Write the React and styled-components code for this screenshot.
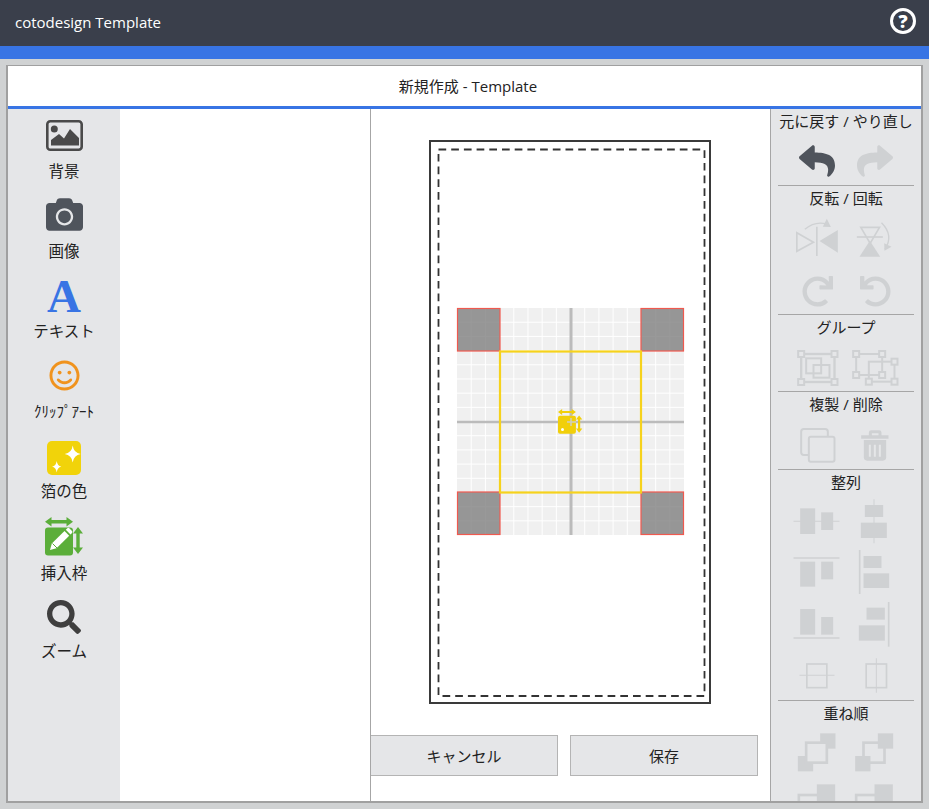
import styled, { createGlobalStyle } from "styled-components";
import { FaCamera, FaRegSmile, FaSearch, FaReply, FaShare, FaRedo, FaUndo } from "react-icons/fa";

const DARK = "#3a3f4b";
const BLUE = "#3874e4";
const RAIL = "#e5e6e8";
const GHOST = "#cfd1d3";
const LINE = "#a6a6a6";

const Global = createGlobalStyle`
  html, body {
    margin: 0;
    height: 100%;
    overflow: hidden;
    background: #d0d2d3;
    color: #222;
    font-family: "Open Sans", "Noto Sans CJK JP", sans-serif;
    font-size: 15px;
  }
  #root { height: 100%; }
`;

const Page = styled.div`
  display: flex;
  flex-direction: column;
  height: 100%;
`;

const Header = styled.header`
  flex: none;
  height: 46px;
  background: ${DARK};
  color: #fff;
  display: flex;
  align-items: center;
  justify-content: space-between;
  padding: 0 13px 2px 15px;
  box-sizing: border-box;
`;

const HelpButton = styled.div`
  width: 26px;
  height: 26px;
  margin-top: -3px;
  box-sizing: border-box;
  border: 3px solid #fff;
  border-radius: 50%;
  display: flex;
  align-items: center;
  justify-content: center;
  font-weight: 800;
  font-size: 18px;
  line-height: 1;
`;

const BlueBar = styled.div`
  flex: none;
  height: 13px;
  background: ${BLUE};
`;

const Panel = styled.main`
  flex: 1;
  min-height: 0;
  margin: 6px;
  border: 2px solid #a0a0a0;
  border-top-width: 1px;
  display: flex;
  flex-direction: column;
  background: #fff;
`;

const TitleBar = styled.div`
  flex: none;
  height: 38px;
  padding: 0 0 2px 7px;
  border-bottom: 3px solid ${BLUE};
  display: flex;
  align-items: center;
  justify-content: center;
`;

const Body = styled.div`
  flex: 1;
  min-height: 0;
  display: flex;
`;

const ToolRail = styled.nav`
  flex: none;
  width: 112px;
  padding-top: 1px;
  background: ${RAIL};
`;

const Tool = styled.div`
  height: 80px;
  display: flex;
  flex-direction: column;
  align-items: center;
`;

const ToolIcon = styled.div`
  height: 50px;
  padding-top: ${(p) => p.$pt || 0}px;
  padding-bottom: ${(p) => p.$pb || 0}px;
  box-sizing: border-box;
  display: flex;
  align-items: center;
  justify-content: center;
`;

const ToolLabel = styled.div`
  height: 21px;
  line-height: 21px;
  margin-top: ${(p) => p.$mt || 1}px;
  font-size: ${(p) => (p.$small ? 15 : 15.5)}px;
  white-space: nowrap;
`;

const LetterIcon = styled.span`
  font-family: "Liberation Serif", serif;
  font-weight: 700;
  font-size: 47px;
  line-height: 50px;
  color: ${BLUE};
`;

const ListColumn = styled.section`
  flex: none;
  width: 250px;
  border-right: 1px solid ${LINE};
`;

const CanvasColumn = styled.section`
  flex: none;
  width: 399px;
  border-right: 1px solid ${LINE};
  display: flex;
  flex-direction: column;
  align-items: center;
`;

const PaperFrame = styled.div`
  width: 282px;
  height: 564px;
  margin: 31px 1px 0 0;
  box-sizing: border-box;
  border: 2px solid #3a3a3a;
  svg { display: block; }
`;

const Buttons = styled.div`
  align-self: stretch;
  margin-top: 31px;
  padding-right: 12px;
  display: flex;
  gap: 12px;
`;

const Button = styled.button`
  flex: 1;
  height: 41px;
  padding: 0;
  background: ${RAIL};
  border: 1px solid #b4b4b4;
  border-left-width: ${(p) => (p.$flush ? 0 : 1)}px;
  font: inherit;
  color: #222;
`;

const ActionRail = styled.aside`
  flex: 1;
  min-width: 0;
  overflow: hidden;
  background: ${RAIL};
`;

const ActionSection = styled.div`
  margin: 0 7px;
  border-bottom: 1px solid ${LINE};
  &:last-child { border-bottom: 0; }
`;

const ActionTitle = styled.div`
  height: ${(p) => p.$h || 26}px;
  padding-bottom: ${(p) => p.$pb ?? 3}px;
  box-sizing: border-box;
  display: flex;
  align-items: center;
  justify-content: center;
  white-space: nowrap;
`;

const IconRow = styled.div`
  height: ${(p) => p.$h || 50}px;
  padding-top: ${(p) => p.$pt || 0}px;
  box-sizing: border-box;
  display: grid;
  grid-template-columns: 58px 58px;
  justify-content: center;
  align-items: center;
  justify-items: center;
`;

const GhostSvg = styled.svg`
  display: block;
  width: 54px;
  height: 44px;
  overflow: visible;
  fill: ${GHOST};
`;

// coordinates below are 3x pixels, measured around the icon's centre
const Ghost = ({ x, y, children }) => (
  <GhostSvg viewBox={`${x - 81} ${y - 66} 162 132`}>{children}</GhostSvg>
);

const outline = { fill: "none", stroke: GHOST };

const Handles = ({ points }) =>
  points.map(([x, y]) => (
    <rect key={x + "-" + y} x={x - 9} y={y - 9} width="18" height="18" fill={RAIL} stroke={GHOST} strokeWidth="6" />
  ));

const ImageIcon = () => (
  <svg width="37" height="31" viewBox="0 0 37 31">
    <rect x="1.3" y="1.3" width="34.4" height="28.4" rx="3" fill="none" stroke="#4a4a4a" strokeWidth="2.6" />
    <circle cx="8.3" cy="9" r="3.5" fill="#4a4a4a" />
    <path d="M5 25.5V20l8-6 5 4.5L24 9l9 9v7.5z" fill="#4a4a4a" />
  </svg>
);

const FoilIcon = () => (
  <svg width="34" height="34" viewBox="0 0 34 34">
    <rect width="34" height="34" rx="5" fill="#f1d30a" />
    <path d="M25.7 4.5q1 7.5 8 8.5q-7 1-8 8.5q-1-7.5-8-8.5q7-1 8-8.5z" fill="#fff" />
    <path d="M9.7 20q.7 5 4.6 5.7q-3.9.7-4.6 5.7q-.7-5-4.6-5.7q3.9-.7 4.6-5.7z" fill="#fff" />
  </svg>
);

const ArrowsAndBox = ({ color }) => (
  <g fill={color}>
    <rect x="0" y="10.5" width="28" height="28" rx="3" />
    <path d="M0 4.7L6.5 0v3h15V0L28 4.7l-6.5 4.7V6.4h-15v3z" />
    <path d="M33 10l5 6.5h-3.3v14H38L33 37l-5-6.500h3.300v-14H28z" />
  </g>
);

const InsertIcon = () => (
  <svg width="38" height="39" viewBox="0 0 38 39">
    <ArrowsAndBox color="#5bae3a" />
    <path d="M5 33l1.8-6.5L19.5 14l4.7 4.7L11.5 31.2z" fill="#fff" />
    <path d="M20.8 12.7l1.5-1.5q1-1 2 0l2.7 2.7q1 1 0 2l-1.5 1.5z" fill="#fff" />
    <path d="M7.5 26.5l4.5 4.5" stroke="#5bae3a" strokeWidth="1" />
  </svg>
);

const PaperDrawing = () => {
  const lines = Array.from({ length: 15 }, (_, i) => 457 + (i + 1) * 14.19);
  const corners = [[457.5, 308.5], [641, 308.5], [457.5, 492], [641, 492]];
  return (
    <svg width="278" height="560" viewBox="431 142 278 560">
      <rect x="438.5" y="149.5" width="266" height="546.5" fill="none" stroke="#333" strokeWidth="1.8" strokeDasharray="7.7 5" />
      <rect x="457" y="308" width="227" height="227" fill="#f0f0f0" />
      {lines.map((v) => (
        <g key={v} stroke="#fff" strokeWidth="1">
          <line x1={v} x2={v} y1="308" y2="535" />
          <line y1={v - 149} y2={v - 149} x1="457" x2="684" />
        </g>
      ))}
      {corners.map(([x, y]) => (
        <rect key={x + "-" + y} x={x} y={y} width="42.5" height="42.5" fill="#808080" fillOpacity="0.8" stroke="#f0594f" strokeWidth="1.2" />
      ))}
      <line x1="571" x2="571" y1="308" y2="535" stroke="#bbb" strokeWidth="3" />
      <line x1="457" x2="684" y1="422" y2="422" stroke="#bbb" strokeWidth="2.5" />
      <rect x="500" y="351.5" width="141" height="141" fill="none" stroke="#f6d21c" strokeWidth="2.2" />
      <g transform="translate(558 409) scale(0.64)">
        <ArrowsAndBox color="#f1cf0a" />
      </g>
      <circle cx="562.5" cy="429.5" r="1.5" fill="#fff" />
      <path d="M567 422h9M571 418v8" stroke="#cfcfc0" strokeWidth="1.5" />
    </svg>
  );
};

const tools = [
  { label: "背景", icon: <ImageIcon /> },
  { label: "画像", icon: <FaCamera size={37} color="#4f545c" />, pb: 2 },
  { label: "テキスト", icon: <LetterIcon>A</LetterIcon>, pt: 1 },
  { label: "ｸﾘｯﾌﾟｱｰﾄ", icon: <FaRegSmile size={31} color="#f0931e" />, pt: 1, small: true },
  { label: "箔の色", icon: <FoilIcon />, pt: 6 },
  { label: "挿入枠", icon: <InsertIcon />, pt: 3, mt: 3 },
  { label: "ズーム", icon: <FaSearch size={34} color="#3f3f3f" />, pt: 4 },
];

export default function App() {
  return (
    <Page>
      <Global />
      <Header>
        <span>cotodesign Template</span>
        <HelpButton>?</HelpButton>
      </Header>
      <BlueBar />
      <Panel>
        <TitleBar>新規作成 - Template</TitleBar>
        <Body>
          <ToolRail>
            {tools.map((t) => (
              <Tool key={t.label}>
                <ToolIcon $pt={t.pt} $pb={t.pb}>{t.icon}</ToolIcon>
                <ToolLabel $mt={t.mt} $small={t.small}>{t.label}</ToolLabel>
              </Tool>
            ))}
          </ToolRail>
          <ListColumn />
          <CanvasColumn>
            <PaperFrame>
              <PaperDrawing />
            </PaperFrame>
            <Buttons>
              <Button $flush>キャンセル</Button>
              <Button>保存</Button>
            </Buttons>
          </CanvasColumn>
          <ActionRail>
            <ActionSection>
              <ActionTitle $h={23} $pb={1}>元に戻す / やり直し</ActionTitle>
              <IconRow $h={53} $pt={5}>
                <FaReply size={36} color="#4f545c" />
                <FaShare size={36} color={GHOST} />
              </IconRow>
            </ActionSection>

            <ActionSection>
              <ActionTitle>反転 / 回転</ActionTitle>
              <IconRow $h={49}>
                <Ghost x={142.5} y={393}>
                  <path d="M142 362v88" {...outline} strokeWidth="5" />
                  <path d="M82 380l50 29-50 27z" {...outline} strokeWidth="5" />
                  <path d="M205 372l-55 33 55 35z" />
                  <path d="M106 370q30-26 66-16" {...outline} strokeWidth="4" />
                  <path d="M184 363l-24-1 12-24z" />
                </Ghost>
                <Ghost x={316.5} y={393}>
                  <path d="M262 393h78" {...outline} strokeWidth="5" />
                  <path d="M274 364h56l-28 48z" {...outline} strokeWidth="5" />
                  <path d="M270 452h62l-31-48z" />
                  <path d="M336 350q38 38 10 80" {...outline} strokeWidth="4" />
                  <path d="M344 412l1 22 21-12z" />
                </Ghost>
              </IconRow>
              <IconRow $h={53} $pt={7}>
                <FaRedo size={31} color={GHOST} />
                <FaUndo size={31} color={GHOST} />
              </IconRow>
            </ActionSection>

            <ActionSection>
              <ActionTitle>グループ</ActionTitle>
              <IconRow $pt={4}>
                <Ghost x={142.5} y={84}>
                  <rect x="95" y="42" width="100" height="84" {...outline} strokeWidth="7" />
                  <rect x="110" y="55" width="45" height="45" {...outline} strokeWidth="6" />
                  <rect x="132" y="75" width="48" height="38" {...outline} strokeWidth="6" />
                  <Handles points={[[95, 42], [195, 42], [95, 126], [195, 126]]} />
                </Ghost>
                <Ghost x={316.5} y={84}>
                  <rect x="260" y="42" width="78" height="63" {...outline} strokeWidth="6" />
                  <rect x="298" y="65" width="77" height="60" {...outline} strokeWidth="6" />
                  <Handles points={[[260, 42], [338, 42], [260, 105], [338, 105], [375, 65], [298, 125], [375, 125]]} />
                </Ghost>
              </IconRow>
            </ActionSection>

            <ActionSection>
              <ActionTitle>複製 / 削除</ActionTitle>
              <IconRow $h={51} $pt={5}>
                <Ghost x={142.5} y={318}>
                  <rect x="95" y="267" width="80" height="78" rx="8" {...outline} strokeWidth="6" />
                  <rect x="118" y="290" width="77" height="75" rx="6" fill={RAIL} stroke={GHOST} strokeWidth="6" />
                </Ghost>
                <Ghost x={316.5} y={318}>
                  <path d="M298 286v-8q0-7 7-7h24q7 0 7 7v8h21v10h-82v-10zm9 0h20v-6h-20z" fillRule="evenodd" />
                  <path d="M283 300h67v52q0 10-10 10h-47q-10 0-10-10z" />
                  <path d="M298 314h6v36h-6zM313 314h6v36h-6zM328 314h6v36h-6z" fill={RAIL} />
                </Ghost>
              </IconRow>
            </ActionSection>

            <ActionSection>
              <ActionTitle>整列</ActionTitle>
              <IconRow>
                <Ghost x={142.5} y={540}>
                  <path d="M72 539h138v3H72z" />
                  <rect x="92" y="502" width="45" height="77" />
                  <rect x="155" y="514" width="36" height="53" />
                </Ghost>
                <Ghost x={316.5} y={540}>
                  <path d="M312 475h3v132h-3z" />
                  <rect x="286" y="492" width="55" height="36" />
                  <rect x="274" y="545" width="78" height="46" />
                </Ghost>
              </IconRow>
              <IconRow $h={51}>
                <Ghost x={142.5} y={693}>
                  <path d="M72 649h138v4H72z" />
                  <rect x="92" y="662" width="45" height="75" />
                  <rect x="155" y="662" width="36" height="53" />
                </Ghost>
                <Ghost x={316.5} y={693}>
                  <path d="M268 627h5v132h-5z" />
                  <rect x="282" y="645" width="54" height="36" />
                  <rect x="282" y="697" width="77" height="44" />
                </Ghost>
              </IconRow>
              <IconRow $h={51}>
                <Ghost x={142.5} y={156}>
                  <path d="M72 199h138v4H72z" />
                  <rect x="92" y="114" width="45" height="77" />
                  <rect x="155" y="138" width="36" height="53" />
                </Ghost>
                <Ghost x={316.5} y={156}>
                  <path d="M355 93h5v134h-5z" />
                  <rect x="291" y="110" width="55" height="36" />
                  <rect x="268" y="163" width="78" height="46" />
                </Ghost>
              </IconRow>
              <IconRow $h={52} $pt={2}>
                <Ghost x={142.5} y={315}>
                  <rect x="112" y="282" width="60" height="71" {...outline} strokeWidth="5" />
                  <path d="M90 314.5h105v3H90z" />
                </Ghost>
                <Ghost x={316.5} y={315}>
                  <rect x="290" y="282" width="61" height="71" {...outline} strokeWidth="5" />
                  <path d="M319 265h3v103h-3z" />
                </Ghost>
              </IconRow>
            </ActionSection>

            <ActionSection>
              <ActionTitle>重ね順</ActionTitle>
              <IconRow>
                <Ghost x={142.5} y={543}>
                  <rect x="152" y="487" width="46" height="46" />
                  <rect x="85" y="555" width="46" height="46" />
                  <rect x="110" y="515" width="62" height="60" fill={RAIL} stroke={GHOST} strokeWidth="8" />
                </Ghost>
                <Ghost x={316.5} y={543}>
                  <rect x="282" y="515" width="63" height="60" {...outline} strokeWidth="8" />
                  <rect x="325" y="487" width="46" height="46" />
                  <rect x="257" y="555" width="46" height="46" />
                </Ghost>
              </IconRow>
              <IconRow $h={52}>
                <Ghost x={142.5} y={699}>
                  <rect x="88" y="675" width="77" height="75" {...outline} strokeWidth="8" />
                  <rect x="142" y="643" width="55" height="55" />
                </Ghost>
                <Ghost x={316.5} y={699}>
                  <rect x="260" y="675" width="77" height="75" {...outline} strokeWidth="8" />
                  <rect x="315" y="643" width="55" height="55" />
                </Ghost>
              </IconRow>
            </ActionSection>
          </ActionRail>
        </Body>
      </Panel>
    </Page>
  );
}
